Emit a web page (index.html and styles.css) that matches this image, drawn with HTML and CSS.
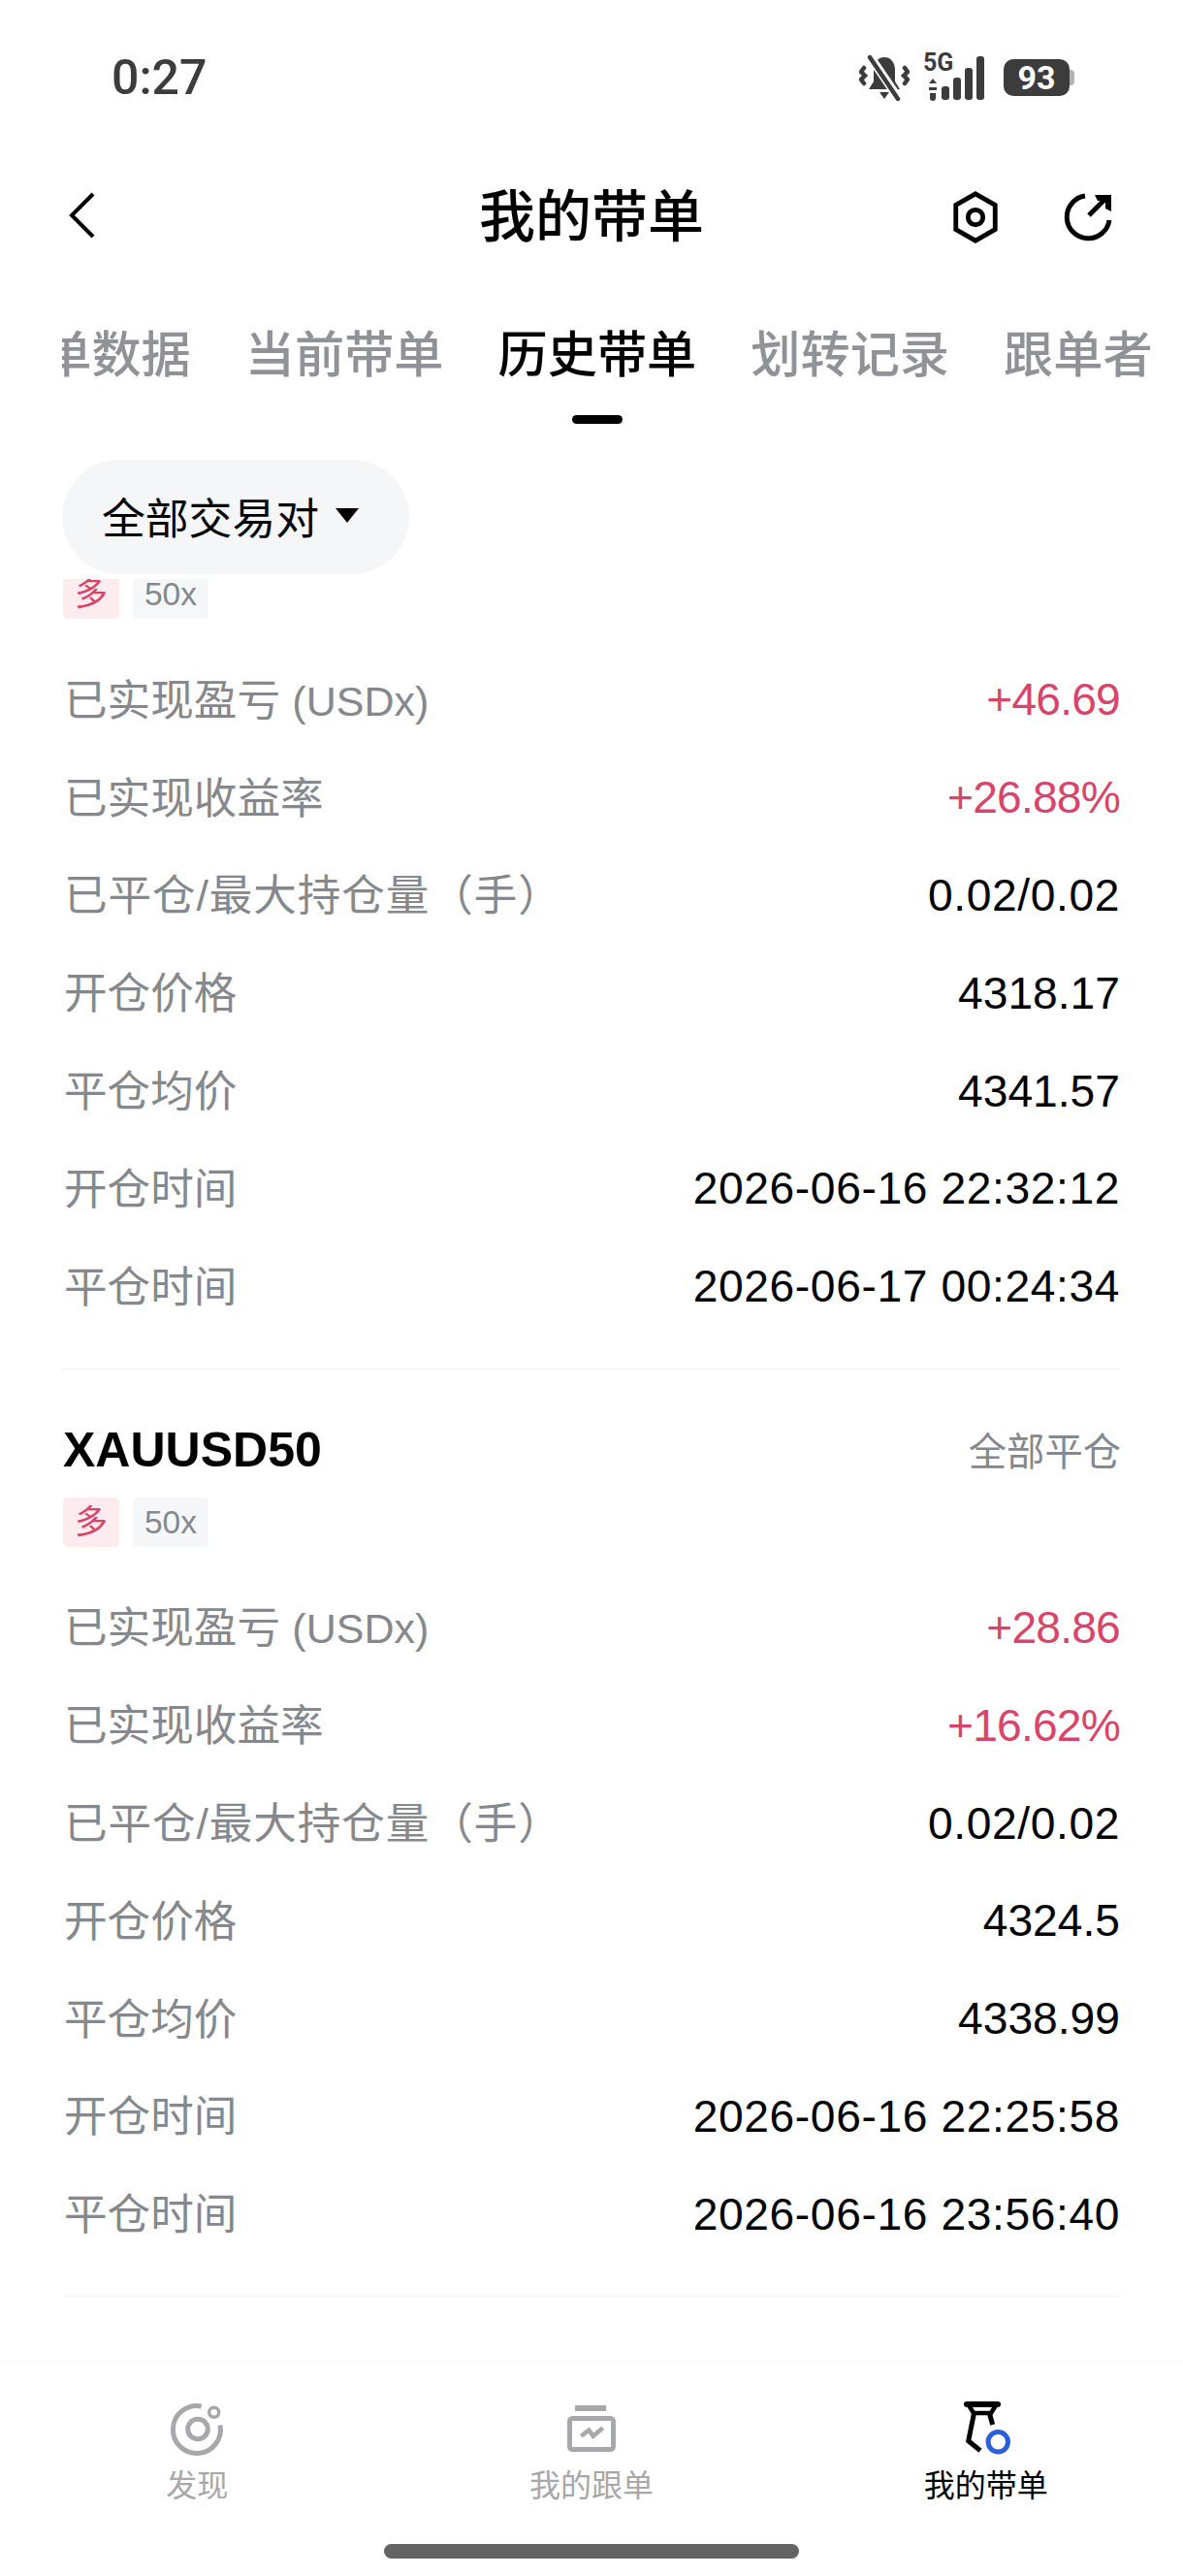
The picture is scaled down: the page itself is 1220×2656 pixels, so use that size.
FILE: index.html
```html
<!DOCTYPE html>
<html lang="zh-CN">
<head>
    <meta charset="UTF-8">
    <meta name="viewport" content="width=device-width, initial-scale=1.0">
    <title>我的带单</title>
    <link rel="stylesheet" href="styles.css">
</head>
<body>
    <div class="app">
        <div class="status-bar">
            <span class="status-time">0:27</span>
            <div class="status-icons">
                <svg class="status-bell" viewBox="0 0 52 48">
                    <path fill="#3c3c3c" d="M26 3c7 0 11 6 11 13v12l5 8H10l5-8V16c0-7 4-13 11-13zM21 39h10l-5 7z"/>
                    <path fill="none" stroke="#fff" stroke-width="9" d="M11 2l30 44"/>
                    <path fill="none" stroke="#3c3c3c" stroke-width="4.5" stroke-linecap="round" d="M11 3l29 43M5 14l-3 4 4 4-4 4 3 4M47 14l3 4-4 4 4 4-3 4"/>
                </svg>
                <div class="status-net">
                    <span class="status-5g">5G</span>
                    <svg class="status-signal" viewBox="0 0 60 48">
                        <path fill="#3c3c3c" d="M2 30l4-5 4 5zM2 34h8v3H2zM3 40h6v5a3 3 0 0 1-6 0z"/>
                        <rect x="15" y="33" width="8" height="14" rx="3" fill="#3c3c3c"/>
                        <rect x="27" y="24" width="8" height="23" rx="3" fill="#3c3c3c"/>
                        <rect x="39" y="14" width="8" height="33" rx="3" fill="#3c3c3c"/>
                        <rect x="51" y="2" width="8" height="45" rx="3" fill="#3c3c3c"/>
                    </svg>
                </div>
                <div class="status-battery"><span class="battery-level">93</span><i class="battery-nub"></i></div>
            </div>
        </div>

        <div class="top-bar">
            <svg class="back-icon" viewBox="0 0 28 48">
                <path fill="none" stroke="#000" stroke-width="4" d="M26 2L4 24l22 22"/>
            </svg>
            <h1>我的带单</h1>
            <div class="top-actions">
                <svg class="top-icon" viewBox="0 0 50 56">
                    <path fill="none" stroke="#000" stroke-width="5" d="M25 3l21 12v26L25 53 4 41V15z"/>
                    <circle cx="25" cy="28" r="8" fill="none" stroke="#000" stroke-width="5"/>
                </svg>
                <svg class="top-icon" viewBox="0 0 50 50">
                    <path fill="none" stroke="#000" stroke-width="5" d="M22 3A22 22 0 1 0 47 28"/>
                    <path fill="none" stroke="#000" stroke-width="5" d="M26 23L44 5"/>
                    <path fill="#000" d="M32 2h17v17l-6-3V8H35z"/>
                </svg>
            </div>
        </div>

        <div class="tabs">
            <div class="tabs-row">
                <span class="tab">带单数据</span>
                <span class="tab">当前带单</span>
                <span class="tab tab-active">历史带单</span>
                <span class="tab">划转记录</span>
                <span class="tab">跟单者</span>
            </div>
        </div>

        <div class="filter-bar">
            <div class="filter-pill">全部交易对<i class="filter-caret"></i></div>
        </div>

        <div class="order-list">
            <div class="order-scroll">
                <!-- first card is scrolled, its head sits behind the filter bar -->
                <div class="order-card">
                    <div class="order-tags">
                        <span class="tag tag-long">多</span>
                        <span class="tag">50x</span>
                    </div>
                    <div class="order-rows">
                        <div class="row"><span class="row-label">已实现盈亏 <span class="row-unit">(USDx)</span></span><span class="row-value value-up">+46.69</span></div>
                        <div class="row"><span class="row-label">已实现收益率</span><span class="row-value value-up">+26.88%</span></div>
                        <div class="row"><span class="row-label label-wide">已平仓/最大持仓量（手）</span><span class="row-value value-wide">0.02/0.02</span></div>
                        <div class="row"><span class="row-label">开仓价格</span><span class="row-value">4318.17</span></div>
                        <div class="row"><span class="row-label">平仓均价</span><span class="row-value">4341.57</span></div>
                        <div class="row"><span class="row-label">开仓时间</span><span class="row-value value-wide">2026-06-16 22:32:12</span></div>
                        <div class="row"><span class="row-label">平仓时间</span><span class="row-value value-wide">2026-06-17 00:24:34</span></div>
                    </div>
                </div>
                <div class="order-card">
                    <div class="order-head">
                        <span class="order-symbol">XAUUSD50</span>
                        <span class="order-state">全部平仓</span>
                    </div>
                    <div class="order-tags">
                        <span class="tag tag-long">多</span>
                        <span class="tag">50x</span>
                    </div>
                    <div class="order-rows">
                        <div class="row"><span class="row-label">已实现盈亏 <span class="row-unit">(USDx)</span></span><span class="row-value value-up">+28.86</span></div>
                        <div class="row"><span class="row-label">已实现收益率</span><span class="row-value value-up">+16.62%</span></div>
                        <div class="row"><span class="row-label label-wide">已平仓/最大持仓量（手）</span><span class="row-value value-wide">0.02/0.02</span></div>
                        <div class="row"><span class="row-label">开仓价格</span><span class="row-value">4324.5</span></div>
                        <div class="row"><span class="row-label">平仓均价</span><span class="row-value">4338.99</span></div>
                        <div class="row"><span class="row-label">开仓时间</span><span class="row-value value-wide">2026-06-16 22:25:58</span></div>
                        <div class="row"><span class="row-label">平仓时间</span><span class="row-value value-wide">2026-06-16 23:56:40</span></div>
                    </div>
                </div>
            </div>
        </div>

        <div class="bottom-nav">
            <div class="nav-items">
                <div class="nav-item">
                    <svg class="nav-icon" viewBox="0 0 60 60">
                        <path fill="none" stroke="#a6a8ab" stroke-width="5" d="M34.7 6A24.5 24.5 0 1 0 54 25.5"/>
                        <circle cx="31" cy="29.5" r="10.3" fill="none" stroke="#a6a8ab" stroke-width="5"/>
                        <circle cx="47.7" cy="12.3" r="5" fill="none" stroke="#a6a8ab" stroke-width="3.5"/>
                    </svg>
                    <span>发现</span>
                </div>
                <div class="nav-item">
                    <svg class="nav-icon" viewBox="0 0 60 60">
                        <rect x="13" y="5" width="32" height="6" fill="#a6a8ab"/>
                        <rect x="7.5" y="18.5" width="45" height="32" rx="3" fill="none" stroke="#a6a8ab" stroke-width="5"/>
                        <path fill="none" stroke="#a6a8ab" stroke-width="4.5" d="M19.3 36.7l8-6 4.4 6 10-8.4"/>
                    </svg>
                    <span>我的跟单</span>
                </div>
                <div class="nav-item nav-active">
                    <svg class="nav-icon" viewBox="0 0 60 60">
                        <path fill="none" stroke="#000" stroke-width="6" stroke-linecap="round" d="M10 4h32"/>
                        <path fill="none" stroke="#000" stroke-width="4.5" d="M12 5l5 8h18l5-8"/>
                        <path fill="none" stroke="#000" stroke-width="5" d="M17.5 13l-5.8 28.7L24 51.7M33.3 13l3.4 12"/>
                        <circle cx="42.3" cy="42.7" r="10.2" fill="none" stroke="#2a5fe0" stroke-width="5"/>
                    </svg>
                    <span>我的带单</span>
                </div>
            </div>
            <div class="home-bar"></div>
        </div>
    </div>
</body>
</html>
```

FILE: styles.css
```css
:root {
    --color-text: #000;
    --color-muted: #85888c;
    --color-up: #d9456a;
    --color-status: #3c3c3c;
    --font-main: "Liberation Sans", "Noto Sans CJK SC", sans-serif;
}

* {
    box-sizing: border-box;
}

body {
    margin: 0;
    background: #fff;
    color: var(--color-text);
    font-family: var(--font-main);
}

.app {
    width: 1220px;
    height: 2656px;
    display: flex;
    flex-direction: column;
    overflow: hidden;
}

.status-bar {
    height: 160px;
    flex: none;
    display: flex;
    align-items: center;
    justify-content: space-between;
    padding: 0 112px 0 115px;
}

.status-time {
    font-family: Roboto, sans-serif;
    font-size: 50px;
    font-weight: 500;
    color: var(--color-status);
}

.status-icons {
    display: flex;
    align-items: center;
}

.status-bell {
    width: 52px;
    height: 48px;
}

.status-net {
    position: relative;
    width: 68px;
    height: 48px;
    margin-left: 14px;
}

.status-5g {
    position: absolute;
    left: 0;
    top: -6px;
    font-family: Roboto, sans-serif;
    font-size: 25px;
    font-weight: 700;
    color: var(--color-status);
}

.status-signal {
    width: 68px;
    height: 48px;
}

.status-battery {
    display: flex;
    align-items: center;
    margin-left: 15px;
}

.battery-level {
    width: 68px;
    height: 38px;
    border-radius: 10px;
    background: var(--color-status);
    color: #fff;
    font-family: Roboto, sans-serif;
    font-size: 34px;
    font-weight: 700;
    line-height: 38px;
    text-align: center;
}

.battery-nub {
    width: 5px;
    height: 16px;
    border-radius: 0 4px 4px 0;
    background: #b4b4b4;
}

.top-bar {
    position: relative;
    height: 124px;
    flex: none;
    display: flex;
    align-items: center;
    justify-content: space-between;
    padding: 0 73px 0 70px;
}

.top-bar h1 {
    position: absolute;
    left: 0;
    right: 0;
    margin: 0 0 6px;
    font-size: 58px;
    font-weight: 500;
    text-align: center;
}

.back-icon {
    width: 28px;
    height: 48px;
}

.top-actions {
    display: flex;
    align-items: center;
    gap: 66px;
    margin-top: 3px;
}

.top-icon {
    width: 50px;
    height: 54px;
}

.tabs {
    height: 190px;
    flex: none;
    margin-left: 64px;
    margin-right: 32px;
    overflow: hidden;
}

.tabs-row {
    display: flex;
    gap: 56px;
    margin-left: -72px;
    padding-top: 45px;
    white-space: nowrap;
}

.tab {
    position: relative;
    height: 108px;
    font-size: 51.2px;
    font-weight: 500;
    line-height: 76px;
    color: #8f9296;
}

.tab-active {
    color: #000;
}

.tab-active::after {
    content: "";
    position: absolute;
    left: 50%;
    bottom: 0;
    width: 52px;
    height: 9px;
    margin-left: -26px;
    border-radius: 5px;
    background: #000;
}

.filter-bar {
    position: relative;
    z-index: 1;
    height: 123px;
    flex: none;
    padding: 0 64px;
    background: #fff;
}

.filter-pill {
    display: inline-flex;
    align-items: center;
    width: 358px;
    height: 118px;
    padding: 0 0 3px 41px;
    border-radius: 59px;
    background: #f4f6f8;
    font-size: 44.8px;
}

.filter-caret {
    width: 0;
    height: 0;
    margin-left: 17px;
    border-left: 12px solid transparent;
    border-right: 12px solid transparent;
    border-top: 15px solid #000;
}

.order-list {
    flex: 1;
    min-height: 0;
    overflow: hidden;
}

.order-scroll {
    margin-top: -10px;
}

.order-card {
    margin: 0 64px;
    padding-bottom: 34px;
    border-bottom: 1px solid #f2f3f4;
}

.order-head {
    display: flex;
    align-items: center;
    justify-content: space-between;
    height: 116px;
    margin-bottom: 16px;
    padding-top: 51px;
}

.order-symbol {
    margin-left: 1px;
    font-size: 50px;
    font-weight: 700;
}

.order-state {
    padding-bottom: 3px;
    font-size: 39.3px;
    color: var(--color-muted);
}

.order-tags {
    display: flex;
    gap: 14px;
    margin-left: 1px;
}

.tag {
    width: 78px;
    height: 51px;
    border-radius: 5px;
    background: #f6f7f8;
    color: var(--color-muted);
    font-size: 33.5px;
    line-height: 51px;
    text-align: center;
}

.tag-long {
    width: 58px;
    background: #fcebef;
    color: var(--color-up);
    font-size: 34px;
}

.order-rows {
    margin-top: 33px;
}

.row {
    display: flex;
    align-items: center;
    justify-content: space-between;
    height: 100.8px;
}

.row-label {
    margin-left: 2px;
    padding-bottom: 6px;
    font-size: 44.6px;
    color: var(--color-muted);
}

.label-wide {
    letter-spacing: .9px;
}

.row-unit {
    font-size: 43px;
}

.row-value {
    margin-right: 1px;
    font-size: 46.2px;
}

.value-up {
    color: var(--color-up);
    letter-spacing: -.8px;
}

.value-wide {
    letter-spacing: .6px;
}

.bottom-nav {
    height: 222px;
    flex: none;
    position: relative;
    z-index: 1;
    display: flex;
    flex-direction: column;
    justify-content: space-between;
    padding-bottom: 18px;
    background: #fff;
    border-top: 1px solid #f6f6f6;
}

.nav-items {
    display: grid;
    grid-template-columns: repeat(3, 1fr);
    padding-top: 40px;
}

.nav-item {
    display: flex;
    flex-direction: column;
    align-items: center;
    font-size: 32px;
    color: #a6a8ab;
}

.nav-icon {
    width: 60px;
    height: 60px;
    margin-bottom: 2px;
}

.nav-active {
    color: #000;
}

.home-bar {
    width: 428px;
    height: 15px;
    margin: 0 auto;
    border-radius: 8px;
    background: #636363;
}
```
